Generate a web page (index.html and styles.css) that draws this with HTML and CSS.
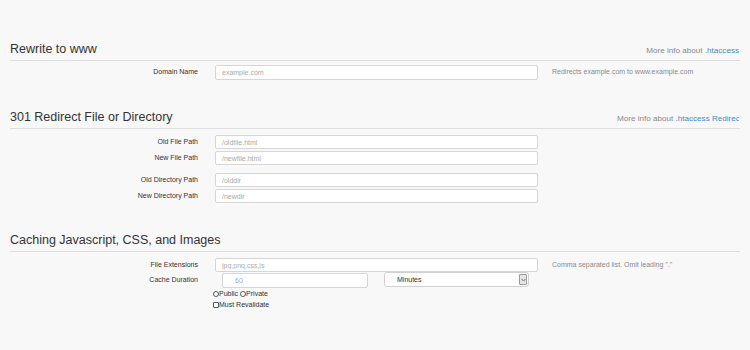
FILE: index.html
```html
<!DOCTYPE html>
<html lang="en">

<head>
    <meta charset="UTF-8">
    <meta name="viewport" content="width=device-width, initial-scale=1.0">
    <title>htaccess Generator</title>
    <link rel="stylesheet" href="styles.css">
</head>

<body>
    <div class="page">
        <section class="block">
            <div class="block-head">
                <h2>Rewrite to www</h2>
                <div class="more">More info about <a href="#">.htaccess</a></div>
            </div>
            <div class="row">
                <label for="domain">Domain Name</label>
                <input type="text" id="domain" class="tall" placeholder="example.com">
                <span class="help">Redirects example.com to www.example.com</span>
            </div>
        </section>

        <section class="block">
            <div class="block-head">
                <h2>301 Redirect File or Directory</h2>
                <div class="more">More info about <a href="#">.htaccess Redirects</a></div>
            </div>
            <div class="group">
                <div class="row">
                    <label for="oldFile">Old File Path</label>
                    <input type="text" id="oldFile" placeholder="/oldfile.html">
                </div>
                <div class="row">
                    <label for="newFile">New File Path</label>
                    <input type="text" id="newFile" placeholder="/newfile.html">
                </div>
            </div>
            <div class="group">
                <div class="row">
                    <label for="oldDir">Old Directory Path</label>
                    <input type="text" id="oldDir" placeholder="/olddir">
                </div>
                <div class="row">
                    <label for="newDir">New Directory Path</label>
                    <input type="text" id="newDir" placeholder="/newdir">
                </div>
            </div>
        </section>

        <section class="block block-cache">
            <div class="block-head">
                <h2>Caching Javascript, CSS, and Images</h2>
            </div>
            <div class="row">
                <label for="exts">File Extensions</label>
                <input type="text" id="exts" placeholder="jpg,png,css,js">
                <span class="help">Comma separated list. Omit leading "."</span>
            </div>
            <div class="row row-duration">
                <label for="duration">Cache Duration</label>
                <div class="duration">
                    <input type="number" id="duration" placeholder="60">
                    <div class="select-wrap">
                        <select id="unit">
                            <option>Minutes</option>
                            <option>Hours</option>
                            <option>Days</option>
                        </select>
                        <span class="select-arrow">
                            <svg width="5" height="4" viewBox="0 0 5 4"><path d="M0.5 1 L2.5 3 L4.5 1" fill="none" stroke="#555" stroke-width="0.8"/></svg>
                        </span>
                    </div>
                </div>
            </div>
            <div class="row row-opts">
                <span></span>
                <div class="options">
                    <div class="opt-line">
                        <label class="opt"><input type="radio" name="scope" class="radio">Public</label>
                        <label class="opt"><input type="radio" name="scope" class="radio">Private</label>
                    </div>
                    <div class="opt-line">
                        <label class="opt"><input type="checkbox" class="check">Must Revalidate</label>
                    </div>
                </div>
            </div>
        </section>
    </div>
</body>

</html>
```

FILE: styles.css
```css
body {
    margin: 0;
    font-family: "Liberation Sans", Arial, sans-serif;
    background-color: #f8f8f8;
    color: #333;
}

.page {
    padding: 41px 10px 20px;
}

.block + .block {
    margin-top: 29px;
}

.block-head {
    display: flex;
    justify-content: space-between;
    align-items: flex-end;
    padding-bottom: 3px;
    border-bottom: 1px solid #dedede;
    margin-bottom: 4px;
}

.block + .block .block-head {
    margin-bottom: 6px;
}

.block-cache .block-head {
    margin-bottom: 4px;
}

.block-head h2 {
    margin: 0;
    font-size: 12.5px;
    line-height: 16px;
    font-weight: normal;
    color: #333;
}

.more {
    width: 122px;
    margin-right: 1px;
    overflow: hidden;
    white-space: nowrap;
    text-align: right;
    font-size: 8.1px;
    line-height: 12px;
    color: #888;
}

.more a {
    color: #428bca;
    text-decoration: none;
}

.row {
    display: grid;
    grid-template-columns: 188px 323px auto;
    column-gap: 17px;
    align-items: start;
    margin-bottom: 2px;
}

.row > label {
    text-align: right;
    font-size: 7px;
    line-height: 13px;
    color: #333;
}

.group + .group {
    margin-top: 8px;
}

input[type="text"],
input[type="number"] {
    box-sizing: border-box;
    width: 100%;
    height: 14px;
    margin: 0;
    padding: 0 6px;
    border: 1px solid #d6d6d6;
    border-radius: 2px;
    background-color: #fff;
    font-family: inherit;
    font-size: 7px;
    color: #555;
}

input.tall {
    height: 15px;
}

input::placeholder {
    color: #aaa;
}

.help {
    margin-left: -3px;
    font-size: 7px;
    line-height: 13px;
    color: #8a8a8a;
}

.row-duration {
    margin-top: -1px;
}

.duration {
    display: flex;
    align-items: flex-start;
    gap: 16px;
    padding-left: 7px;
}

.duration input[type="number"] {
    width: 146px;
    height: 15px;
    padding-left: 12px;
    -moz-appearance: textfield;
}

.duration input::-webkit-inner-spin-button,
.duration input::-webkit-outer-spin-button {
    -webkit-appearance: none;
    margin: 0;
}

.select-wrap {
    position: relative;
    margin-top: -1px;
}

.select-wrap select {
    display: block;
    appearance: none;
    -webkit-appearance: none;
    box-sizing: border-box;
    width: 145px;
    height: 15px;
    margin: 0;
    padding: 0 0 0 12px;
    border: 1px solid #d0d0d0;
    border-radius: 3px;
    background-color: #fff;
    font-family: inherit;
    font-size: 7px;
    color: #333;
}

.select-arrow {
    position: absolute;
    top: 2px;
    right: 2px;
    width: 6px;
    height: 9px;
    display: flex;
    align-items: center;
    justify-content: center;
    border: 1px solid #999;
    border-radius: 1px;
    background-color: #e4e4e4;
    pointer-events: none;
}

.row-opts {
    margin-top: -1px;
}

.options {
    margin-left: -2px;
    font-size: 7px;
    line-height: 10px;
    color: #333;
}

.opt-line {
    display: flex;
}

.opt-line + .opt-line {
    margin-top: 1px;
}

.opt {
    display: flex;
    align-items: center;
    margin-right: 2px;
}

.radio,
.check {
    appearance: none;
    -webkit-appearance: none;
    box-sizing: border-box;
    width: 6px;
    height: 6px;
    margin: 0;
    border: 1px solid #555;
    background-color: #fff;
}

.radio {
    border-radius: 50%;
}

.check {
    border-radius: 1px;
}
```
